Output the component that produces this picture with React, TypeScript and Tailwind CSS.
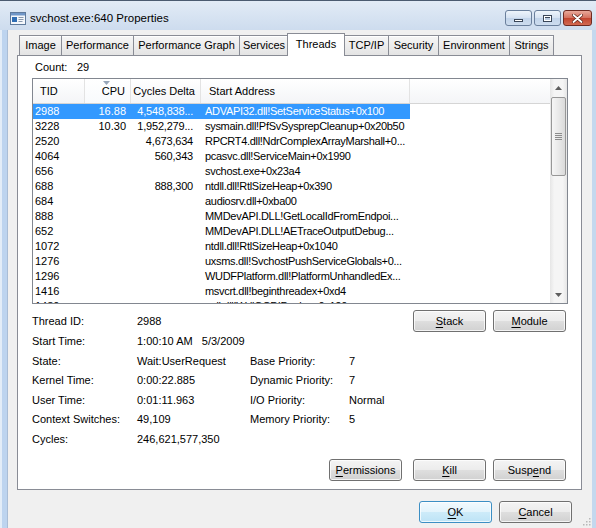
import React from 'react';

type Row = [string, string, string, string];

const rows: Row[] = [
    ['2988', '16.88', '4,548,838...', 'ADVAPI32.dll!SetServiceStatus+0x100'],
    ['3228', '10.30', '1,952,279...', 'sysmain.dll!PfSvSysprepCleanup+0x20b50'],
    ['2520', '', '4,673,634', 'RPCRT4.dll!NdrComplexArrayMarshall+0...'],
    ['4064', '', '560,343', 'pcasvc.dll!ServiceMain+0x1990'],
    ['656', '', '', 'svchost.exe+0x23a4'],
    ['688', '', '888,300', 'ntdll.dll!RtlSizeHeap+0x390'],
    ['684', '', '', 'audiosrv.dll+0xba00'],
    ['888', '', '', 'MMDevAPI.DLL!GetLocalIdFromEndpoi...'],
    ['652', '', '', 'MMDevAPI.DLL!AETraceOutputDebug...'],
    ['1072', '', '', 'ntdll.dll!RtlSizeHeap+0x1040'],
    ['1276', '', '', 'uxsms.dll!SvchostPushServiceGlobals+0...'],
    ['1296', '', '', 'WUDFPlatform.dll!PlatformUnhandledEx...'],
    ['1416', '', '', 'msvcrt.dll!beginthreadex+0xd4'],
    ['1480', '', '', 'wdi.dll!WdiQCDIDevice+0x120'],
];

const tabs = [
    { label: 'Image', w: 'w-[43px]' },
    { label: 'Performance', w: 'w-[73px]' },
    { label: 'Performance Graph', w: 'w-[107px]' },
    { label: 'Services', w: 'w-[50px]' },
    { label: 'Threads', w: 'w-[58px]', active: true },
    { label: 'TCP/IP', w: 'w-[45px]' },
    { label: 'Security', w: 'w-[51px]' },
    { label: 'Environment', w: 'w-[72px]' },
    { label: 'Strings', w: 'w-[45px]' },
];

// label with an underlined accelerator letter
const Accel = ({ text, at }: { text: string; at: number }) => (
    <span>
        {text.slice(0, at)}
        <span className="underline underline-offset-[2px]">{text[at]}</span>
        {text.slice(at + 1)}
    </span>
);

const Btn = ({ text, at, className = '', isDefault = false }: { text: string; at: number; className?: string; isDefault?: boolean }) => (
    <div
        className={`h-[22px] w-[73px] rounded-[3px] border flex items-center justify-center text-[11px] text-black shadow-[inset_0_0_0_1px_rgba(255,255,255,0.75)] ${
            isDefault
                ? 'border-[#3c8fc4] bg-[linear-gradient(#f2fafe_0%,#e3f4fc_48%,#cdebf9_52%,#bde3f6_100%)]'
                : 'border-[#707070] bg-[linear-gradient(#f4f4f4_0%,#ececec_48%,#dedede_52%,#d1d1d1_100%)]'
        } ${className}`}
    >
        <Accel text={text} at={at} />
    </div>
);

const TitleIcon = () => (
    <svg width="16" height="13" viewBox="0 0 16 13">
        <rect x="0.5" y="0.5" width="15" height="12" fill="#f4f7fb" stroke="#5f7a9c" />
        <rect x="1" y="1" width="14" height="2.5" fill="#6f96c8" />
        <rect x="2" y="5" width="5" height="5" fill="#2f6db3" />
        <rect x="8.5" y="5" width="5" height="1" fill="#8797ad" />
        <rect x="8.5" y="7" width="5" height="1" fill="#8797ad" />
        <rect x="8.5" y="9" width="4" height="1" fill="#8797ad" />
    </svg>
);

const ScrollBar = () => (
    <div className="w-[17px] h-full flex flex-col bg-[linear-gradient(90deg,#e6e6e6,#f5f5f5_25%,#f5f5f5_75%,#e6e6e6)]">
        <div className="h-[17px] flex items-center justify-center">
            <svg width="7" height="4" viewBox="0 0 7 4"><path d="M0 4 L3.5 0 L7 4 Z" fill="#5e5e5e" /></svg>
        </div>
        <div className="mt-[1px] h-[79px] mx-[1px] rounded-[2px] border border-[#979797] bg-[linear-gradient(90deg,#f6f6f6,#e9e9e9_50%,#dadada)] flex flex-col items-center justify-center gap-[1px]">
            <div className="w-[7px] h-[1px] bg-[#8c8c8c]" />
            <div className="w-[7px] h-[1px] bg-[#8c8c8c]" />
            <div className="w-[7px] h-[1px] bg-[#8c8c8c]" />
            <div className="w-[7px] h-[1px] bg-[#8c8c8c]" />
        </div>
        <div className="flex-1" />
        <div className="h-[17px] flex items-center justify-center">
            <svg width="7" height="4" viewBox="0 0 7 4"><path d="M0 0 L3.5 4 L7 0 Z" fill="#5e5e5e" /></svg>
        </div>
    </div>
);

const ThreadList = () => (
    <div className="ml-[14px] mt-[4px] w-[536px] h-[226px] border border-[#828790] bg-white flex overflow-hidden">
        <div className="flex-1 flex flex-col overflow-hidden">
            <div className="h-[25px] shrink-0 flex border-b border-[#d5d5d5] bg-[linear-gradient(#ffffff,#f4f5f7)] text-[11px] text-black">
                <div className="w-[52px] border-r border-[#e3e3e3] flex items-center pl-[7px]">TID</div>
                <div className="relative w-[46px] border-r border-[#e3e3e3] bg-[linear-gradient(#ffffff,#f8fafc)] flex items-center justify-end pr-[5px]">
                    <svg className="absolute left-[18px] top-[2px]" width="7" height="4" viewBox="0 0 7 4"><path d="M0 0 L3.5 4 L7 0 Z" fill="#97a6b9" /></svg>
                    CPU
                </div>
                <div className="w-[70px] border-r border-[#e3e3e3] flex items-center justify-end pr-[5px]">Cycles Delta</div>
                <div className="w-[209px] border-r border-[#e3e3e3] flex items-center pl-[8px]">Start Address</div>
                <div className="flex-1" />
            </div>
            {rows.map((r, i) => {
                const sel = i === 0;
                return (
                    <div key={i} className="h-[15px] shrink-0 flex text-[11px] leading-[15px]">
                        <div className={`flex ${sel ? 'bg-[#3399ff] text-white' : 'text-black'}`}>
                            <div className="w-[52px] pl-[2px] whitespace-nowrap">{r[0]}</div>
                            <div className="w-[46px] pr-[5px] text-right whitespace-nowrap">{r[1]}</div>
                            <div className="w-[70px] pr-[8px] text-right whitespace-nowrap tracking-[-0.2px]">{r[2]}</div>
                            <div className="w-[209px] pl-[4px] whitespace-nowrap tracking-[-0.3px]">{r[3]}</div>
                        </div>
                    </div>
                );
            })}
        </div>
        <ScrollBar />
    </div>
);

const DetailRow = ({ a, av, b, bv }: { a: string; av: string; b?: string; bv?: string }) => (
    <div className="h-[19.5px] flex items-center pl-[14px] text-[11px] text-black whitespace-pre">
        <span className="w-[105px]">{a}</span>
        <span className="w-[113px]">{av}</span>
        {b && <span className="w-[99px]">{b}</span>}
        {bv && <span>{bv}</span>}
    </div>
);

export default function App() {
    return (
        <div className="w-[596px] h-[528px] overflow-hidden flex flex-col [font-family:'Liberation_Sans',Arial,sans-serif] bg-[#c4d8ee]">
            {/* title bar */}
            <div className="h-[30px] shrink-0 flex items-start border-t border-[#4b5b70] bg-[linear-gradient(#e2ebf6,#cddcee)] pl-[10px] pr-[4px]">
                <div className="mt-[11px] flex items-center">
                    <TitleIcon />
                    <span className="ml-[4px] text-[11.5px] leading-[13px] text-black">svchost.exe:640 Properties</span>
                </div>
                <div className="ml-auto mt-[9px] flex gap-[2px]">
                    <div className="w-[27px] h-[16px] rounded-[3px] border border-[#6a7f9c] bg-[linear-gradient(#eef4fb,#d5e2f2_50%,#c2d4ea_52%,#cddcee)] flex items-center justify-center">
                        <div className="mt-[5px] w-[9px] h-[3px] bg-white border border-[#3a4658]" />
                    </div>
                    <div className="w-[27px] h-[16px] rounded-[3px] border border-[#6a7f9c] bg-[linear-gradient(#eef4fb,#d5e2f2_50%,#c2d4ea_52%,#cddcee)] flex items-center justify-center">
                        <div className="w-[9px] h-[7px] border border-[#3a4658] bg-white flex items-center justify-center">
                            <div className="w-[5px] h-[3px] bg-[#b9cbe2] border-t border-[#3a4658]" />
                        </div>
                    </div>
                    <div className="w-[29px] h-[16px] rounded-[3px] border border-[#6e2a22] bg-[linear-gradient(#e9a99b,#d46f5d_50%,#c2442f_52%,#d26a52)] flex items-center justify-center">
                        <svg width="11" height="9" viewBox="0 0 11 9">
                            <path d="M1.5 1 L9.5 8 M9.5 1 L1.5 8" stroke="#5a2016" strokeWidth="3.2" strokeLinecap="round" />
                            <path d="M1.5 1 L9.5 8 M9.5 1 L1.5 8" stroke="#ffffff" strokeWidth="1.8" strokeLinecap="round" />
                        </svg>
                    </div>
                </div>
            </div>

            <div className="flex-1 flex">
                {/* left frame */}
                <div className="w-[8px] flex">
                    <div className="w-[2px] bg-[#e3edf8]" />
                    <div className="flex-1 bg-[#bdd4ef]" />
                    <div className="w-[1px] bg-[#a9bdd6]" />
                </div>

                {/* client */}
                <div className="relative w-[584px] bg-[#f0f0f0] pl-[9px] pt-[2px] flex flex-col">
                    {/* tabs */}
                    <div className="h-[23px] flex items-end pl-[2px] text-[11px] text-black">
                        {tabs.map((t, i) =>
                            t.active ? (
                                <div key={t.label} className={`${t.w} -ml-[2px] -mb-px relative z-10 h-[23px] border border-b-0 border-[#898c95] bg-white flex items-center justify-center pb-[2px]`}>
                                    {t.label}
                                </div>
                            ) : (
                                <div key={t.label} className={`${t.w} ${i === 0 ? '' : '-ml-px'} h-[20px] border border-b-0 border-[#898c95] bg-[linear-gradient(#f6f6f6,#e4e4e4)] shadow-[inset_0_1px_0_#ffffff] flex items-center justify-center`}>
                                    {t.label}
                                </div>
                            )
                        )}
                    </div>

                    {/* tab page */}
                    <div className="w-[565px] h-[435px] border border-[#898c95] bg-white flex flex-col">
                        <div className="mt-[4px] h-[14px] flex items-center pl-[17px] text-[11px] text-black">
                            <span className="w-[42px]">Count:</span>
                            <span>29</span>
                        </div>

                        <ThreadList />

                        <div className="mt-[7px] h-[20.5px] flex items-center pl-[14px] pr-[15px] text-[11px] text-black">
                            <span className="w-[105px]">Thread ID:</span>
                            <span>2988</span>
                            <div className="ml-auto flex gap-[7px]">
                                <Btn text="Stack" at={0} />
                                <Btn text="Module" at={0} />
                            </div>
                        </div>
                        <DetailRow a="Start Time:" av="1:00:10 AM   5/3/2009" />
                        <DetailRow a="State:" av="Wait:UserRequest" b="Base Priority:" bv="7" />
                        <DetailRow a="Kernel Time:" av="0:00:22.885" b="Dynamic Priority:" bv="7" />
                        <DetailRow a="User Time:" av="0:01:11.963" b="I/O Priority:" bv="Normal" />
                        <DetailRow a="Context Switches:" av="49,109" b="Memory Priority:" bv="5" />
                        <DetailRow a="Cycles:" av="246,621,577,350" />

                        <div className="mt-[10.5px] flex justify-end pr-[15px]">
                            <Btn text="Permissions" at={0} />
                            <Btn text="Kill" at={0} className="ml-[11px]" />
                            <Btn text="Suspend" at={4} className="ml-[7px]" />
                        </div>
                    </div>

                    {/* dialog buttons */}
                    <div className="mt-[11px] flex justify-end pr-[20px] gap-[7px]">
                        <Btn text="OK" at={0} isDefault />
                        <Btn text="Cancel" at={0} />
                    </div>

                    {/* size grip */}
                    <svg className="absolute right-[1px] bottom-[2px]" width="10" height="10" viewBox="0 0 10 10">
                        {[[8, 2], [8, 5], [5, 5], [8, 8], [5, 8], [2, 8]].map(([x, y], i) => (
                            <rect key={i} x={x} y={y} width="1.5" height="1.5" fill="#b8b8b8" />
                        ))}
                    </svg>
                </div>

                {/* right frame */}
                <div className="w-[4px] bg-[#c4d8ee]" />
            </div>
        </div>
    );
}
